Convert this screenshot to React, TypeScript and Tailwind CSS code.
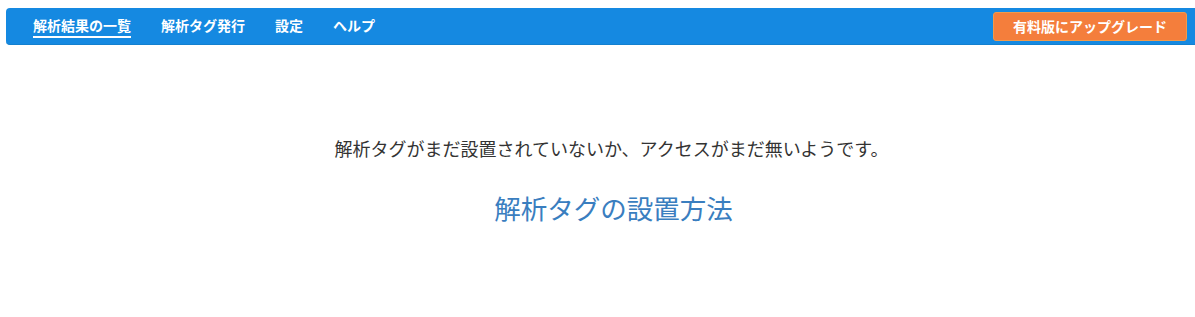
import React from 'react';

const navItems = ['解析結果の一覧', '解析タグ発行', '設定', 'ヘルプ'];

const font = { fontFamily: '"Noto Sans CJK JP", "Noto Sans", sans-serif' };

export default function App() {
  return (
    <div className="w-[1195px] h-[317px] bg-white overflow-hidden" style={font}>
      <div className="pt-2 pl-[6px]">
        <nav className="flex items-center h-[37px] bg-[#1589e1] rounded-l-[4px] border-b border-[#1380cf] pl-[27px] pr-2">
          <ul className="flex items-center gap-[30px] h-full">
            {navItems.map((item, i) => (
              <li key={item} className="relative h-full flex items-center">
                <span className="text-white text-[14px] font-bold leading-none pb-[2px]">{item}</span>
                {i === 0 && (
                  <span className="absolute left-0 right-0 top-[28px] h-[2px] bg-white" />
                )}
              </li>
            ))}
          </ul>
          <button className="ml-auto h-[29px] px-[19px] rounded-[3px] bg-[#f47e3c] border border-[#f29a4a] text-white text-[14px] font-bold leading-none">
            有料版にアップグレード
          </button>
        </nav>
      </div>
      <div className="flex flex-col items-center pt-[92px] pl-[28px]">
        <p className="text-[18px] text-[#333333] leading-[22px]">
          解析タグがまだ設置されていないか、アクセスがまだ無いようです。
        </p>
        <a className="mt-[33px] ml-[4px] text-[26.5px] text-[#3a7ebf] leading-[32px] cursor-pointer">
          解析タグの設置方法
        </a>
      </div>
    </div>
  );
}
